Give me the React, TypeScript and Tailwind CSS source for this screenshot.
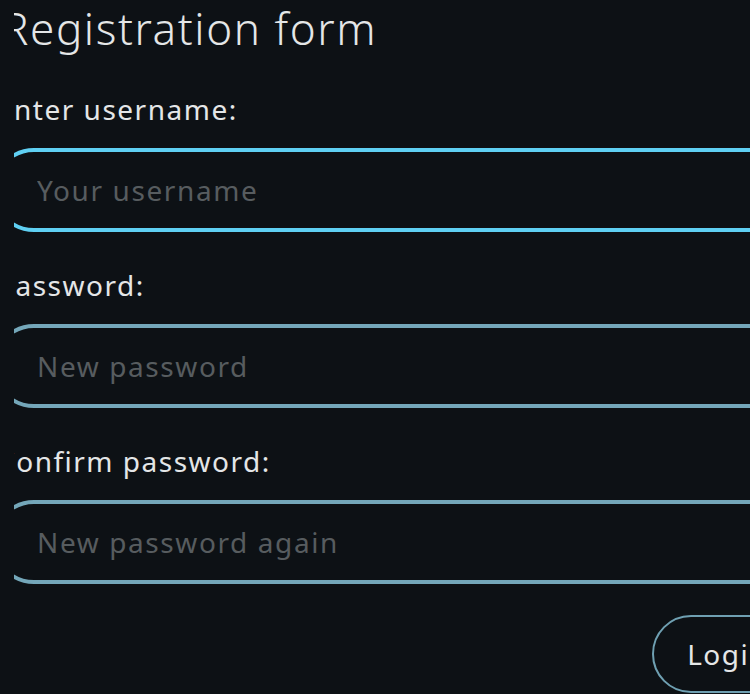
import React from 'react';

const fields = [
  { id: 'username', label: 'Enter username:', placeholder: 'Your username', type: 'text', focused: true },
  { id: 'password', label: 'Password:', placeholder: 'New password', type: 'password', focused: false },
  { id: 'confirm', label: 'Confirm password:', placeholder: 'New password again', type: 'password', focused: false },
];

export default function App() {
  return (
    <div
      className="h-[694px] w-full overflow-hidden bg-[#0d1115] pl-[14px] text-[#e4e6e7]"
      style={{ fontFamily: '"Noto Sans", "Open Sans", sans-serif' }}
    >
      <div className="h-full overflow-hidden">
        <form className="ml-[-22px] flex w-[811px] flex-col" onSubmit={(e) => e.preventDefault()}>
          <h1 className="ml-[10px] h-[56px] text-[44px] font-light leading-[56px] tracking-[1.6px]">
            Registration form
          </h1>

          {fields.map((f) => (
            <div key={f.id} className="mt-[35px] flex flex-col gap-[21px]">
              <label htmlFor={f.id} className="ml-[5px] text-[28px] leading-[36px] tracking-[1.5px]">
                {f.label}
              </label>
              <input
                id={f.id}
                type={f.type}
                placeholder={f.placeholder}
                className={
                  f.focused
                    ? 'h-[84px] w-full rounded-full border-4 border-[#5fd0f3] bg-transparent pl-[41px] text-[28px] tracking-[1.6px] outline-none placeholder:text-[#575c5f]'
                    : 'h-[84px] w-full rounded-full border-4 border-[#74a7b9] bg-transparent pl-[41px] text-[28px] tracking-[1.6px] outline-none placeholder:text-[#575c5f]'
                }
              />
            </div>
          ))}

          <div className="mt-[31px] flex justify-end">
            <button
              type="submit"
              className="h-[78px] rounded-full border-2 border-[#6fa0b2] px-[33px] text-[28px] tracking-[1.5px] text-[#e4e6e7]"
            >
              Login
            </button>
          </div>
        </form>
      </div>
    </div>
  );
}
